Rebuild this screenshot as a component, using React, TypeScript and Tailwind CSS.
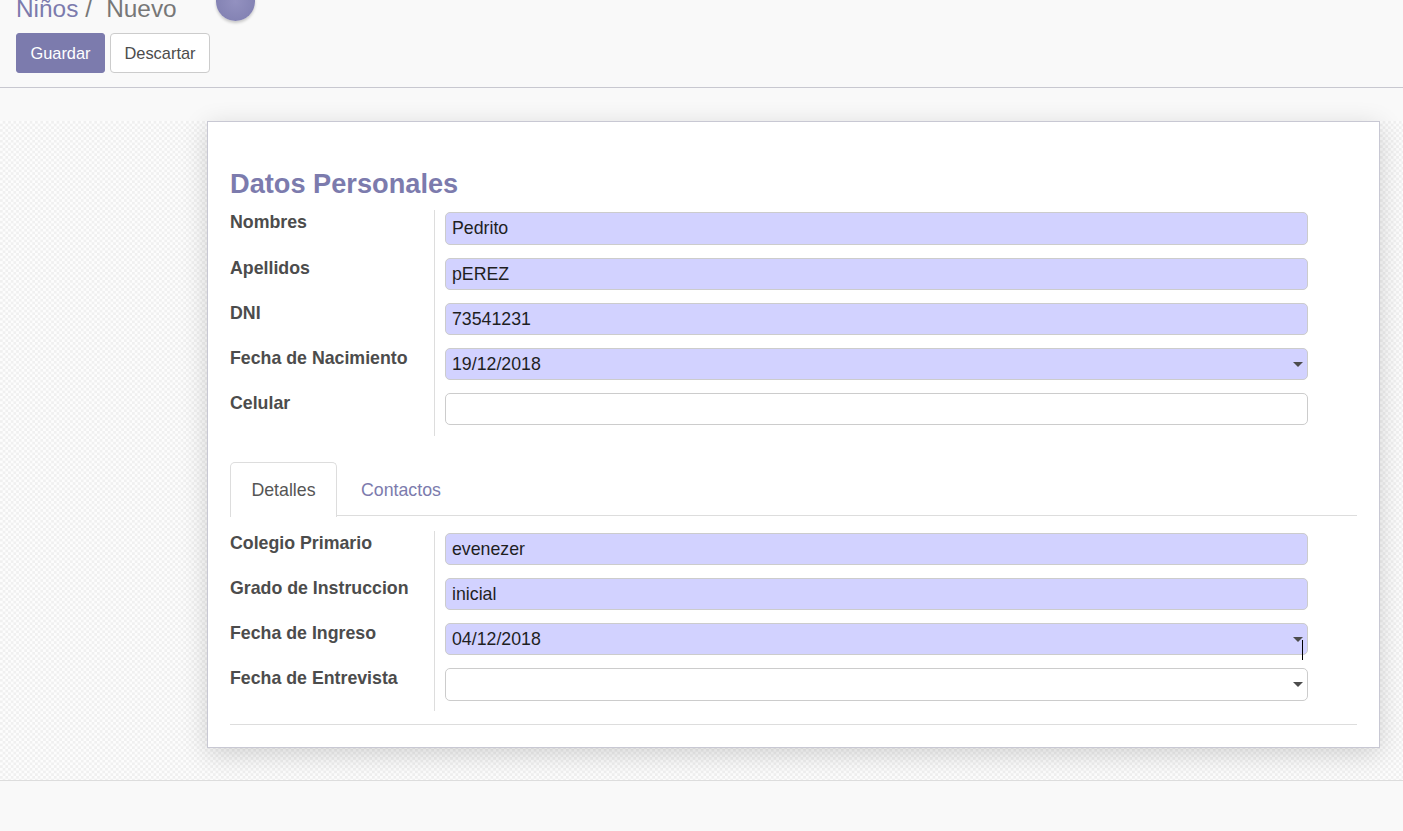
type Row = { label: string; value: string; required?: boolean; date?: boolean };

const personal: Row[] = [
  { label: 'Nombres', value: 'Pedrito', required: true },
  { label: 'Apellidos', value: 'pEREZ', required: true },
  { label: 'DNI', value: '73541231', required: true },
  { label: 'Fecha de Nacimiento', value: '19/12/2018', required: true, date: true },
  { label: 'Celular', value: '' },
];

const details: Row[] = [
  { label: 'Colegio Primario', value: 'evenezer', required: true },
  { label: 'Grado de Instruccion', value: 'inicial', required: true },
  { label: 'Fecha de Ingreso', value: '04/12/2018', required: true, date: true },
  { label: 'Fecha de Entrevista', value: '', date: true },
];

function Field({ label, value, required, date }: Row) {
  return (
    <div className="flex h-[45.1px]">
      <div className="w-[205px] border-r border-[#dddddd] pt-[0.2px] text-[17.75px] leading-[24px] font-bold whitespace-nowrap text-[#4c4c4c]">
        {label}
      </div>
      <div
        className={`mt-[2.2px] ml-[10px] flex h-[32.5px] w-[863px] items-center justify-between rounded-[5px] border border-[#cccccc] pr-[4px] pl-[6px] text-[17.75px] text-[#1f1f1f] ${
          required ? 'bg-[#d2d2ff]' : 'bg-white'
        }`}
      >
        <span>{value}</span>
        {date && (
          <svg width="10" height="5" viewBox="0 0 10 5" className="fill-[#4c4c4c]">
            <path d="M0 0h10L5 5z" />
          </svg>
        )}
      </div>
    </div>
  );
}

export default function App() {
  return (
    <div className="relative flex h-[831px] w-[1403px] flex-col overflow-hidden bg-[#f9f9f9] font-['Liberation_Sans',Arial,sans-serif]">
      <header className="h-[88px] shrink-0 border-b border-[#c8c8d0] pl-4">
        <div className="-mt-[5px] flex h-[38px] items-start text-[24.4px] leading-[28px] whitespace-pre">
          <span className="text-[#7c7bad]">Niños</span>
          <span className="ml-[7px] text-[#777777]">/</span>
          <span className="ml-[14px] text-[#777777]">Nuevo</span>
        </div>
        <div className="flex gap-[5px] text-[16.4px]">
          <button className="h-[40px] w-[89px] rounded-[3px] border border-[#7c7bad] bg-[#7c7bad] text-white">Guardar</button>
          <button className="h-[40px] w-[100px] rounded-[4px] border border-[#cccccc] bg-white text-[#4c4c4c]">Descartar</button>
        </div>
      </header>
      <div className="absolute -top-[18px] left-[216px] size-[39px] rounded-full bg-[radial-gradient(circle,#9391c0_0%,#8382b3_75%)] shadow-[0_2px_3px_rgba(0,0,0,0.2)]" />

      <main className="mt-[33px] h-[660px] shrink-0 border-b border-[#dddddd] bg-[conic-gradient(#f0f0f0_25%,#fdfdfd_0_50%,#f0f0f0_0_75%,#fdfdfd_0)] bg-[length:5.4px_5.4px] pl-[207px]">
        <section className="h-[627px] w-[1173px] border border-[#c8c8d3] bg-white pl-[22px] shadow-[0_6px_25px_rgba(0,0,0,0.16)]">
          <h1 className="pt-[46px] text-[27.2px] leading-[32px] font-bold text-[#7c7bad]">Datos Personales</h1>
          <div className="mt-[10.3px]">
            {personal.map((row) => (
              <Field key={row.label} {...row} />
            ))}
          </div>
          <nav className="mt-[26.2px] flex h-[55px] w-[1127px] text-[17.75px]">
            <div className="flex w-[107px] items-center justify-center rounded-t-[5px] border border-b-0 border-[#dddddd] text-[#555555]">Detalles</div>
            <div className="mb-px flex flex-1 items-center border-b border-[#dddddd] pt-[3px] pl-[24px] text-[#7c7bad]">Contactos</div>
          </nav>
          <div className="mt-[13.6px]">
            {details.map((row) => (
              <Field key={row.label} {...row} />
            ))}
          </div>
          <hr className="mt-[13px] w-[1127px] border-[#dddddd]" />
        </section>
      </main>
      <div className="absolute top-[640px] left-[1302px] h-[20px] w-px bg-black" />
    </div>
  );
}
